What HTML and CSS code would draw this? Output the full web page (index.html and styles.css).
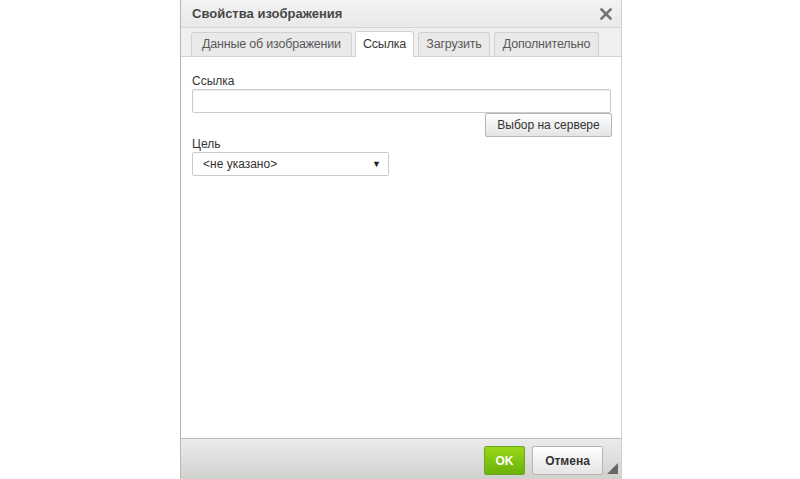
FILE: index.html
```html
<!DOCTYPE html>
<html lang="ru">
<head>
<meta charset="utf-8">
<link rel="stylesheet" href="styles.css">
</head>
<body>
<div class="dialog">
  <div class="title">
    <span class="title-text">Свойства изображения</span>
    <svg class="close" width="12" height="12" viewBox="0 0 12 12"><path d="M1.5 1.5L10.5 10.5M10.5 1.5L1.5 10.5" stroke="#727272" stroke-width="2.5" stroke-linecap="square"/></svg>
  </div>
  <div class="tabs">
    <div class="tab t1">Данные об изображении</div>
    <div class="tab t2 active">Ссылка</div>
    <div class="tab t3">Загрузить</div>
    <div class="tab t4">Дополнительно</div>
  </div>
  <div class="body">
    <label class="label">Ссылка</label>
    <div class="input"></div>
    <div class="btn-row"><button class="btn">Выбор на сервере</button></div>
    <label class="label label2">Цель</label>
    <div class="select"><span>&lt;не указано&gt;</span><span class="arrow">&#9660;</span></div>
  </div>
  <div class="footer">
    <button class="ok">OK</button>
    <button class="cancel">Отмена</button>
    <span class="resize"></span>
  </div>
</div>
</body>
</html>
```
FILE: styles.css
```css
html, body { margin: 0; padding: 0; background: #fff; }
body { font-family: Arial, "Liberation Sans", sans-serif; font-size: 12px; color: #333; }
.dialog {
  width: 440px; height: 479px; margin-left: 180px;
  border-left: 1px solid #b6b6b6; border-right: 1px solid #d0d0d0;
  display: flex; flex-direction: column; background: #fff;
}
.title {
  height: 28px; box-sizing: border-box; padding: 0 9px 0 11px;
  display: flex; align-items: center; justify-content: space-between;
  background: linear-gradient(#f3f3f3, #e9e9e9);
  border-bottom: 1px solid #d6d6d6;
}
.title-text { font-weight: bold; font-size: 13px; color: #474747; }
.close { display: block; }
.tabs {
  height: 29px; box-sizing: border-box; padding: 4px 10px 0;
  display: flex; gap: 3px; align-items: flex-end;
  background: #f0f0f0; border-bottom: 1px solid #d1d1d1;
}
.tab {
  height: 24px; box-sizing: border-box; padding: 0; flex-shrink: 0; white-space: nowrap; text-align: center;
  border: 1px solid #d1d1d1; border-bottom: none; border-radius: 3px 3px 0 0;
  background: #e9e9e9; color: #595959; font-size: 12.5px; line-height: 23px; letter-spacing: -0.2px;
}
.t1 { width: 161px; }
.t2 { width: 59px; }
.t3 { width: 72px; margin-left: 1px; }
.t4 { width: 105px; margin-left: 1px; }
.tab.active { background: #fff; color: #383838; height: 26px; margin-bottom: -1px; line-height: 25px; }
.body { flex: 1; padding: 17px 10px 0 11px; display: flex; flex-direction: column; align-items: flex-start; }
.label { font-size: 12px; color: #333; line-height: 14px; }
.input {
  width: 419px; height: 24px; box-sizing: border-box; margin-top: 1px;
  border: 1px solid #c9cccf; border-radius: 2px; box-shadow: inset 0 1px 1px rgba(0,0,0,0.08);
}
.btn-row { width: 420px; display: flex; justify-content: flex-end; margin-top: 0; }
.btn {
  height: 24px; width: 127px; padding: 0; font-family: inherit; font-size: 12px; color: #333;
  border: 1px solid #b6b6b6; border-radius: 2px;
  background: linear-gradient(#fff, #e4e4e4);
}
.label2 { margin-top: 0; }
.select {
  width: 197px; height: 24px; box-sizing: border-box; margin-top: 1px;
  border: 1px solid #c9cccf; border-radius: 2px; padding: 0 7px 0 10px;
  display: flex; justify-content: space-between; align-items: center; font-size: 12px; color: #333;
}
.arrow { font-size: 9px; color: #222; }
.footer {
  height: 41px; box-sizing: border-box; border-top: 1px solid #bcbcbc;
  background: linear-gradient(#ebebeb, #cfd1cf);
  display: flex; align-items: flex-start; padding: 7px 0 0 303px; gap: 7px; position: relative;
}
.ok {
  width: 41px; height: 29px; font-family: inherit; font-size: 12px; font-weight: bold; color: #fff;
  border: 1px solid #6aa61e; border-radius: 2px;
  background: linear-gradient(#9ad717, #69b10b);
}
.cancel {
  width: 71px; height: 29px; font-family: inherit; font-size: 12px; font-weight: bold; color: #333;
  border: 1px solid #b6b6b6; border-radius: 2px;
  background: linear-gradient(#fff, #e4e4e4);
}
.resize {
  position: absolute; right: 3px; bottom: 5px; width: 0; height: 0;
  border-left: 11px solid transparent; border-bottom: 11px solid #666;
}
```
